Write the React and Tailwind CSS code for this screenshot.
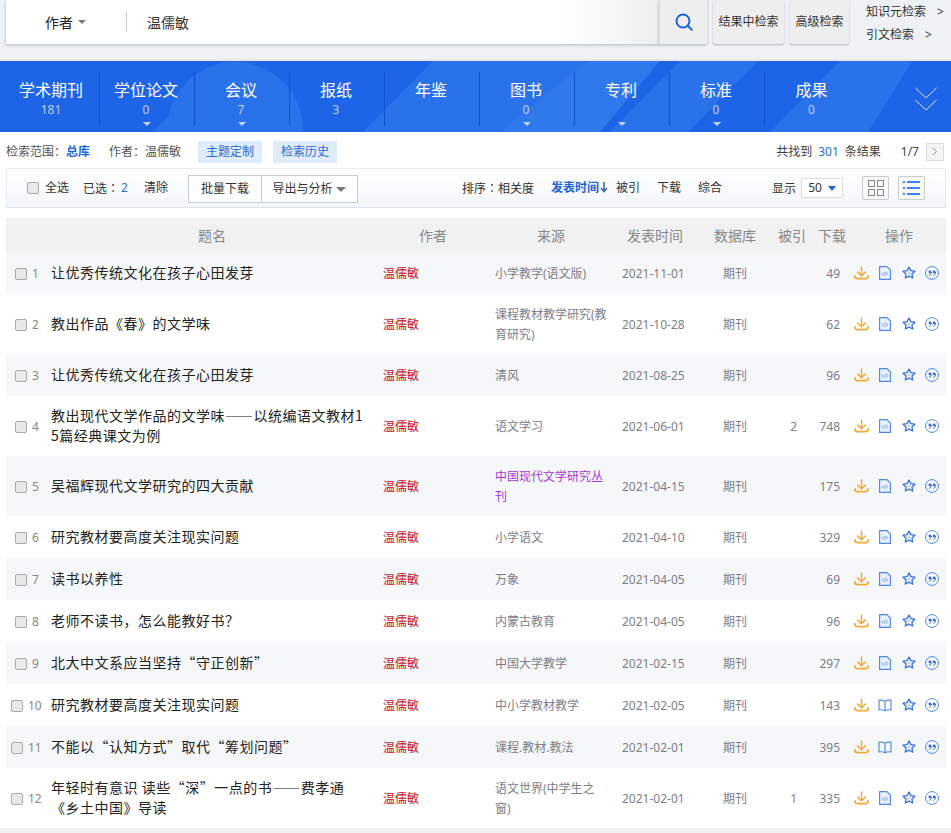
import React from "react";

const font = { fontFamily: '"Noto Sans", "Noto Sans CJK SC", sans-serif' };

const navItems = [
  { name: "学术期刊", count: "181" },
  { name: "学位论文", count: "0", arrow: true },
  { name: "会议", count: "7", arrow: true },
  { name: "报纸", count: "3" },
  { name: "年鉴", count: "" },
  { name: "图书", count: "0", arrow: true },
  { name: "专利", count: "", arrow: true },
  { name: "标准", count: "0", arrow: true },
  { name: "成果", count: "0" },
];

const rows = [
  { title: "让优秀传统文化在孩子心田发芽", source: "小学教学(语文版)", date: "2021-11-01", down: "49" },
  { title: "教出作品《春》的文学味", source: "课程教材教学研究(教育研究)", date: "2021-10-28", down: "62", tall: true },
  { title: "让优秀传统文化在孩子心田发芽", source: "清风", date: "2021-08-25", down: "96" },
  { title: "教出现代文学作品的文学味——以统编语文教材1\n5篇经典课文为例", source: "语文学习", date: "2021-06-01", cite: "2", down: "748", tall: true },
  { title: "吴福辉现代文学研究的四大贡献", source: "中国现代文学研究丛刊", date: "2021-04-15", down: "175", tall: true, purple: true },
  { title: "研究教材要高度关注现实问题", source: "小学语文", date: "2021-04-10", down: "329" },
  { title: "读书以养性", source: "万象", date: "2021-04-05", down: "69" },
  { title: "老师不读书，怎么能教好书？", source: "内蒙古教育", date: "2021-04-05", down: "96", tc: true },
  { title: "北大中文系应当坚持“守正创新”", source: "中国大学教学", date: "2021-02-15", down: "297" },
  { title: "研究教材要高度关注现实问题", source: "中小学教材教学", date: "2021-02-05", down: "143", book: true },
  { title: "不能以“认知方式”取代“筹划问题”", source: "课程.教材.教法", date: "2021-02-01", down: "395", book: true },
  { title: "年轻时有意识 读些“深”一点的书——费孝通\n《乡土中国》导读", source: "语文世界(中学生之窗)", date: "2021-02-01", cite: "1", down: "335", tall: true },
];

function Checkbox() {
  return <span className="block w-[12px] h-[12px] rounded-[2px] border border-[#aaaaaa] bg-[#e8e8e8] shrink-0" />;
}

function Caret({ className }) {
  return <span className={"inline-block w-0 h-0 border-x-transparent " + className} />;
}

// centered full-width colon, the SC glyph sits low and left
function Colon() {
  return <span className="font-['Noto_Sans_CJK_TC']">：</span>;
}

function DownloadIcon() {
  return (
    <svg width="15" height="14" viewBox="0 0 15 14" fill="none" stroke="#f5a93a" strokeWidth="1.5">
      <path d="M7.5 0.500v9M3.300 5.600l4.200 4.100 4.200-4.100" />
      <path d="M.8 9.200c0 2.200 1 3.400 2.500 3.400h8.400c1.500 0 2.500-1.200 2.500-3.400" strokeWidth="1.800" />
    </svg>
  );
}

function DocIcon() {
  return (
    <svg width="12" height="14" viewBox="0 0 12 14" fill="none">
      <path d="M.6.6h7.200l3.600 3.400v9.400H.6z" fill="#eaf1fd" stroke="#4f86e6" strokeWidth="1.100" />
      <path d="M4.600 6.200 3 7.800l1.600 1.600M7.400 6.200 9 7.800 7.400 9.400M6.500 5.800 5.500 9.800" stroke="#6e9eec" strokeWidth=".9" />
    </svg>
  );
}

function BookIcon() {
  return (
    <svg width="14" height="13" viewBox="0 0 14 13" fill="none" stroke="#5a8fe6" strokeWidth="1.200">
      <path d="M7 2.400C5.600 1.200 3.400 1 1 1.200v9.600c2.400-.2 4.600 0 6 1 1.400-1 3.600-1.200 6-1V1.200C10.600 1 8.400 1.200 7 2.400zM7 2.400v9.400" />
    </svg>
  );
}

function StarIcon() {
  return (
    <svg width="14" height="14" viewBox="0 0 14 14" fill="none">
      <path d="M7 1 8.900 4.600l4 .6-2.900 2.800.7 4L7 10.200l-3.700 1.800.7-4-2.900-2.800 4-.6z" stroke="#3a72dc" strokeWidth="1.300" strokeLinejoin="round" fill="#edf3fd" />
      <circle cx="7" cy="7.200" r="1.100" fill="#b5cdf5" />
    </svg>
  );
}

function QuoteIcon() {
  return (
    <svg width="14" height="14" viewBox="0 0 14 14" fill="none">
      <circle cx="7" cy="7" r="6.400" stroke="#4f86e6" strokeWidth="1" />
      <circle cx="4.900" cy="5.900" r="1.400" fill="#2f6ad8" />
      <circle cx="9.100" cy="5.900" r="1.400" fill="#2f6ad8" />
      <path d="M6.300 6c0 1.700-.8 2.900-2.200 3.500M10.500 6c0 1.700-.8 2.900-2.200 3.500" stroke="#2f6ad8" strokeWidth="1" />
    </svg>
  );
}

function Row({ row, index }) {
  const striped = index % 2 === 0;
  return (
    <div className={"flex items-center pt-[2px] " + (row.tall ? "h-[60px] " : "h-[42px] ") + (striped ? "bg-[#f6f7f9]" : "bg-white")}>
      <div className={"flex items-center gap-[5px] w-[45px] shrink-0 " + (index >= 9 ? "pl-[5px]" : "pl-[9px]")}>
        <Checkbox />
        <span className="text-[12px] text-[#888]">{index + 1}</span>
      </div>
      <div
        lang="zh-CN"
        className={"w-[332px] shrink-0 -mt-[4px] text-[14px] leading-[20px] tracking-[0.5px] text-[#222] whitespace-pre-line " + (row.tc ? "font-['Noto_Sans_CJK_TC']" : "font-['Noto_Sans_CJK_SC']")}
      >
        {row.title}
      </div>
      <div className="w-[112px] shrink-0 text-[12px] text-[#c4121c]">温儒敏</div>
      <div className={"w-[127px] shrink-0 pr-[15px] text-[12px] leading-[20px] " + (row.purple ? "text-[#a638d6]" : "text-[#7d7d88]")}>{row.source}</div>
      <div className="w-[82px] shrink-0 text-[12px] text-[#7d7d88]">{row.date}</div>
      <div className="w-[62px] shrink-0 text-[12px] text-[#7d7d88] text-center">期刊</div>
      <div className="w-[31px] shrink-0 text-[12px] text-[#8a7d88] text-right">{row.cite}</div>
      <div className="w-[43px] shrink-0 text-[12px] text-[#7d7d88] text-right">{row.down}</div>
      <div className="flex items-center ml-[14px] -mt-[2px]">
        <DownloadIcon />
        <span className="ml-[9px] w-[14px] flex justify-center">{row.book ? <BookIcon /> : <DocIcon />}</span>
        <span className="ml-[10px]"><StarIcon /></span>
        <span className="ml-[9px]"><QuoteIcon /></span>
      </div>
    </div>
  );
}

export default function App() {
  return (
    <div style={font} className="w-[951px] h-[833px] overflow-hidden bg-white">
      {/* search area */}
      <div className="h-[61px] bg-[#eff2f5] border-b-2 border-[#e6e6e6] flex items-start pl-[6px]">
        <div className="flex items-center w-[653px] h-[44px] bg-gradient-to-r from-white from-[85%] to-[#eeeeee] shadow-[0_1px_3px_rgba(0,0,0,0.25)]">
          <div className="w-[120px] pl-[39px] flex items-center gap-[5px] text-[14px] text-[#222]">
            作者 <Caret className="border-x-[4px] border-t-[4px] border-t-[#777]" />
          </div>
          <div className="h-[20px] border-l border-[#ccc]" />
          <div className="pl-[20px] text-[14px] text-[#333]">温儒敏</div>
        </div>
        <button className="w-[48px] h-[44px] bg-[#eeeeee] border-l border-[#ddd] shadow-[0_1px_3px_rgba(0,0,0,0.25)] flex items-center justify-center">
          <svg width="18" height="18" viewBox="0 0 18 18" fill="none" stroke="#1d65d8" strokeWidth="2">
            <circle cx="8" cy="8" r="6.500" />
            <path d="m12.800 12.800 4 4" strokeLinecap="round" />
          </svg>
        </button>
        <button className="ml-[6px] w-[71px] h-[44px] bg-[#eeeeee] rounded-[2px] shadow-[0_1px_2px_rgba(0,0,0,0.25)] text-[12px] text-[#333]">结果中检索</button>
        <button className="ml-[6px] w-[59px] h-[44px] bg-[#eeeeee] rounded-[2px] shadow-[0_1px_2px_rgba(0,0,0,0.25)] text-[12px] text-[#333]">高级检索</button>
        <div className="pl-[17px] text-[12px] leading-[23px] text-[#333]">
          <div className="whitespace-nowrap">知识元检索<span className="ml-[11px]">&gt;</span></div>
          <div className="whitespace-nowrap">引文检索<span className="ml-[11px]">&gt;</span></div>
        </div>
      </div>

      {/* database tabs */}
      <div className="relative h-[71px] bg-[#1d65e6] overflow-hidden">
        <svg className="absolute inset-0" width="951" height="71" viewBox="0 0 951 71">
          <circle cx="235" cy="69" r="68" fill="#2a72ea" />
          <path d="M153 71 L200 22 L240 71Z" fill="#2a72ea" />
          <path d="M363 71 L433 0 H610 L545 71Z" fill="#2a72ea" />
          <path d="M500 71 L588 0 H660 L600 71Z" fill="#3079ec" />
          <path d="M610 71 L680 0 H758 L688 71Z" fill="#2a72ea" />
          <path d="M770 71 L840 0 H912 L868 71Z" fill="#2a72ea" />
        </svg>
        <div className="relative flex pl-[5px] pt-[11px]">
          {navItems.map((item, i) => (
            <div key={item.name} className={"relative w-[95px] h-[54px] pt-[7px] pr-[2px] text-center " + (i < 8 ? "border-r border-[#0f52d0]" : "")}>
              <div className="text-[16px] leading-[22px] text-white">{item.name}</div>
              <div className="text-[12px] leading-[16px] mt-[1px] text-[#bcd2f8]">{item.count}</div>
              {item.arrow && (
                <span className="absolute left-[43px] top-[50px] flex">
                  <Caret className="border-x-[4px] border-t-[4px] border-t-[#bcd2f8]" />
                </span>
              )}
            </div>
          ))}
          <svg className="ml-[55px] mt-[15px]" width="22" height="24" viewBox="0 0 22 24" fill="none" stroke="#dbe7fc" strokeWidth="1">
            <path d="m.5 1 10.500 10L21.500 1M.5 13 11 23l10.500-10" />
          </svg>
        </div>
      </div>

      {/* search summary */}
      <div lang="zh-CN" className="h-[36px] pt-[3px] flex items-center pl-[6px] pr-[7px] text-[12px] text-[#555]">
        <span>检索范围<Colon /><b className="font-bold text-[#1d65d8]">总库</b></span>
        <span className="ml-[19px]">作者<Colon />温儒敏</span>
        <span className="ml-[17px] w-[64px] h-[22px] flex items-center justify-center bg-[#e0ebfb] text-[#2a6cd4]">主题定制</span>
        <span className="ml-[11px] w-[64px] h-[22px] flex items-center justify-center bg-[#e0ebfb] text-[#2a6cd4]">检索历史</span>
        <span className="ml-auto text-[#444]">共找到<span className="mx-[6px] text-[#2a6cd4]">301</span>条结果</span>
        <span className="ml-[20px] text-[#444]">1/7</span>
        <span className="ml-[7px] w-[18px] h-[18px] flex items-center justify-center bg-[#f3f3f3] border border-[#ddd]">
          <svg width="6" height="9" viewBox="0 0 6 9" fill="none" stroke="#999"><path d="m1 1 3.500 3.500L1 8" /></svg>
        </span>
      </div>

      {/* toolbar */}
      <div className="mx-[6px] w-[940px] h-[40px] flex items-center border border-[#e8ecf1] border-b-[#dde3ea] bg-gradient-to-b from-white to-[#f3f6fa] text-[12px] text-[#333]">
        <span className="ml-[20px]"><Checkbox /></span>
        <span className="ml-[6px]">全选</span>
        <span className="ml-[14px]">已选<Colon /></span>
        <span className="ml-[2px] text-[#2a6cd4]">2</span>
        <span className="ml-[16px]">清除</span>
        <span className="ml-[20px] w-[74px] h-[28px] flex items-center justify-center bg-white border border-[#ccc] mt-[2px]">批量下载</span>
        <span className="w-[96px] h-[28px] flex items-center justify-center gap-[4px] bg-white border border-l-0 border-[#ccc] mt-[2px]">
          导出与分析 <Caret className="border-x-[5px] border-t-[5px] border-t-[#777]" />
        </span>
        <span className="ml-[104px]">排序<Colon />相关度</span>
        <b className="ml-[17px] font-bold text-[#1d65d8]">发表时间</b>
        <svg className="ml-[1px] -mt-[2px]" width="8" height="11" viewBox="0 0 8 11" fill="none" stroke="#3d5f9e" strokeWidth="1.500"><path d="M4 0v9M1 6l3 3.500L7 6" /></svg>
        <span className="ml-[8px]">被引</span>
        <span className="ml-[17px]">下载</span>
        <span className="ml-[17px]">综合</span>
        <span className="ml-[50px] mt-[2px]">显示</span>
        <span className="ml-[5px] w-[42px] h-[20px] flex items-center justify-center gap-[6px] bg-white border border-[#ddd] text-[#333]">
          50 <Caret className="border-x-[4px] border-t-[5px] border-t-[#1d65d8]" />
        </span>
        <span className="ml-[19px] w-[27px] h-[24px] flex items-center justify-center bg-[#f7f8fa] border border-[#ccc] rounded-[2px]">
          <svg width="16" height="16" viewBox="0 0 16 16" fill="none" stroke="#888" strokeWidth="1"><rect x=".5" y=".5" width="6" height="6" /><rect x="9.500" y=".5" width="6" height="6" /><rect x=".5" y="9.500" width="6" height="6" /><rect x="9.500" y="9.500" width="6" height="6" /></svg>
        </span>
        <span className="ml-[9px] w-[27px] h-[24px] flex items-center justify-center bg-[#f7f8fa] border border-[#ccc] rounded-[2px]">
          <svg width="17" height="14" viewBox="0 0 17 14" fill="none" stroke="#3d82f0" strokeWidth="2"><path d="M0 1h2M4 1h13M0 7h2M4 7h13M0 13h2M4 13h13" /></svg>
        </span>
      </div>

      {/* result table */}
      <div className="mx-[6px] w-[940px] mt-[10px]">
        <div className="h-[34px] bg-[#f1f1f1] text-[14px] text-[#888] flex items-center whitespace-nowrap">
          <span className="w-[45px] shrink-0" />
          <span className="w-[322px] shrink-0 text-center">题名</span>
          <span className="w-[120px] shrink-0 text-center">作者</span>
          <span className="w-[116px] shrink-0 text-center">来源</span>
          <span className="w-[92px] shrink-0 text-center">发表时间</span>
          <span className="w-[68px] shrink-0 text-center">数据库</span>
          <span className="w-[46px] shrink-0 text-center">被引</span>
          <span className="w-[34px] shrink-0 text-center">下载</span>
          <span className="w-[100px] shrink-0 text-center">操作</span>
        </div>
        {rows.map((row, i) => (
          <Row key={i} row={row} index={i} />
        ))}
      </div>
      <div className="h-[5px] bg-[#f1f1f1]" />
    </div>
  );
}
